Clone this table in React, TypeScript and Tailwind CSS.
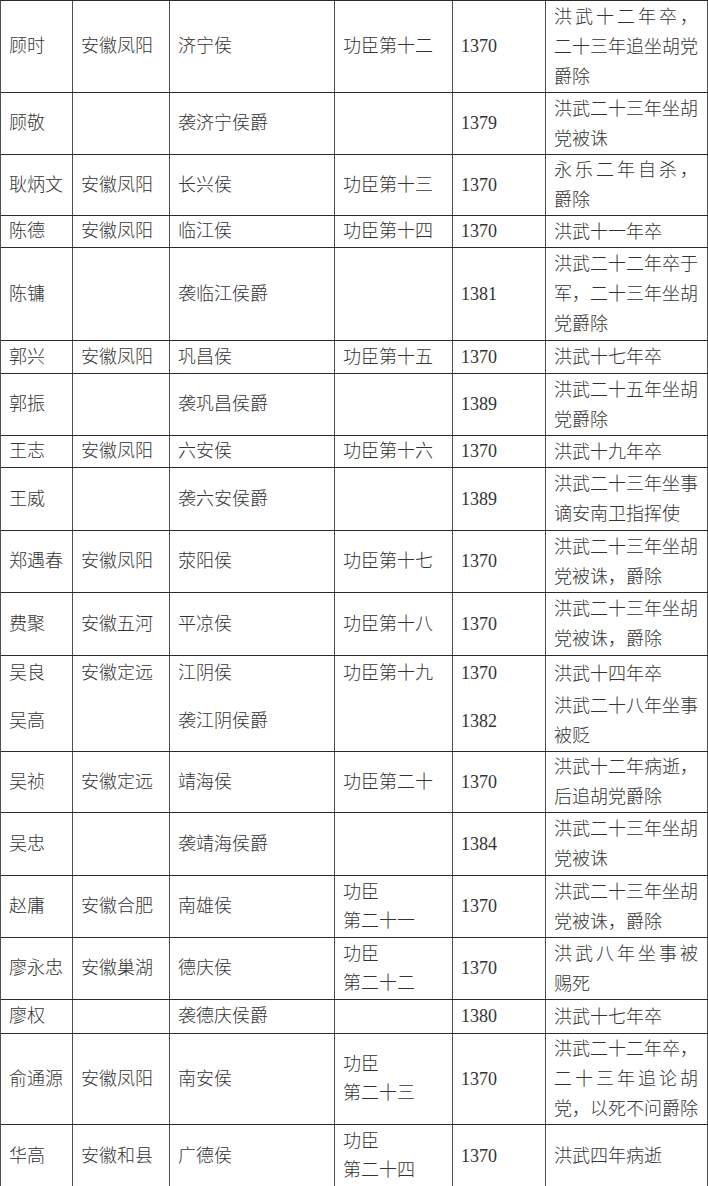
import React from 'react';
import clsx from 'clsx';

type Row = {
  h: string;
  name: string;
  place?: string;
  title: string;
  rank?: string[];
  year: string;
  note: string[];
  just?: number[];
};

const rows: Row[] = [
  { h: 'h-[92px]', name: '顾时', place: '安徽凤阳', title: '济宁侯', rank: ['功臣第十二'], year: '1370', note: ['洪武十二年卒，', '二十三年追坐胡党', '爵除'], just: [0] },
  { h: 'h-[62px]', name: '顾敬', title: '袭济宁侯爵', year: '1379', note: ['洪武二十三年坐胡', '党被诛'] },
  { h: 'h-[61px]', name: '耿炳文', place: '安徽凤阳', title: '长兴侯', rank: ['功臣第十三'], year: '1370', note: ['永乐二年自杀，', '爵除'], just: [0] },
  { h: 'h-[32px]', name: '陈德', place: '安徽凤阳', title: '临江侯', rank: ['功臣第十四'], year: '1370', note: ['洪武十一年卒'] },
  { h: 'h-[93px]', name: '陈镛', title: '袭临江侯爵', year: '1381', note: ['洪武二十二年卒于', '军，二十三年坐胡', '党爵除'] },
  { h: 'h-[33px]', name: '郭兴', place: '安徽凤阳', title: '巩昌侯', rank: ['功臣第十五'], year: '1370', note: ['洪武十七年卒'] },
  { h: 'h-[62px]', name: '郭振', title: '袭巩昌侯爵', year: '1389', note: ['洪武二十五年坐胡', '党爵除'] },
  { h: 'h-[32px]', name: '王志', place: '安徽凤阳', title: '六安侯', rank: ['功臣第十六'], year: '1370', note: ['洪武十九年卒'] },
  { h: 'h-[63px]', name: '王威', title: '袭六安侯爵', year: '1389', note: ['洪武二十三年坐事', '谪安南卫指挥使'] },
  { h: 'h-[62px]', name: '郑遇春', place: '安徽凤阳', title: '荥阳侯', rank: ['功臣第十七'], year: '1370', note: ['洪武二十三年坐胡', '党被诛，爵除'] },
  { h: 'h-[63px]', name: '费聚', place: '安徽五河', title: '平凉侯', rank: ['功臣第十八'], year: '1370', note: ['洪武二十三年坐胡', '党被诛，爵除'] },
];

const rowsAfter: Row[] = [
  { h: 'h-[61px]', name: '吴祯', place: '安徽定远', title: '靖海侯', rank: ['功臣第二十'], year: '1370', note: ['洪武十二年病逝，', '后追胡党爵除'] },
  { h: 'h-[63px]', name: '吴忠', title: '袭靖海侯爵', year: '1384', note: ['洪武二十三年坐胡', '党被诛'] },
  { h: 'h-[62px]', name: '赵庸', place: '安徽合肥', title: '南雄侯', rank: ['功臣', '第二十一'], year: '1370', note: ['洪武二十三年坐胡', '党被诛，爵除'] },
  { h: 'h-[62px]', name: '廖永忠', place: '安徽巢湖', title: '德庆侯', rank: ['功臣', '第二十二'], year: '1370', note: ['洪武八年坐事被', '赐死'], just: [0] },
  { h: 'h-[34px]', name: '廖权', title: '袭德庆侯爵', year: '1380', note: ['洪武十七年卒'] },
  { h: 'h-[91px]', name: '俞通源', place: '安徽凤阳', title: '南安侯', rank: ['功臣', '第二十三'], year: '1370', note: ['洪武二十二年卒，', '二十三年追论胡', '党，以死不问爵除'], just: [1] },
  { h: 'h-[63px]', name: '华高', place: '安徽和县', title: '广德侯', rank: ['功臣', '第二十四'], year: '1370', note: ['洪武四年病逝'] },
];

const grid = 'grid grid-cols-[72px_97px_165px_118px_93px_162px]';
const line = 'border-[#4d4d4d]';

function Cell({ children, className }: { children?: React.ReactNode; className?: string }) {
  return (
    <div className={clsx('flex flex-col justify-center border-r pl-2', line, className)}>
      {children}
    </div>
  );
}

function Note({ lines, just }: { lines: string[]; just?: number[] }) {
  return (
    <>
      {lines.map((t, i) => (
        <div
          key={i}
          className={clsx('whitespace-nowrap', just?.includes(i) && 'text-justify [text-align-last:justify]')}
        >
          {t}
        </div>
      ))}
    </>
  );
}

function TableRow({ r }: { r: Row }) {
  return (
    <div className={clsx(grid, r.h, 'border-b border-[#2a2a2a]')}>
      <Cell>{r.name}</Cell>
      <Cell>{r.place}</Cell>
      <Cell>{r.title}</Cell>
      <Cell className="leading-[29px]">
        {r.rank?.map((t) => <div key={t}>{t}</div>)}
      </Cell>
      <Cell className="text-[18px]">{r.year}</Cell>
      <Cell className="pr-[9px] leading-[30px]">
        <Note lines={r.note} just={r.just} />
      </Cell>
    </div>
  );
}

// 吴良 / 吴高 share one bordered block
function SplitRow() {
  const top = 'flex h-[35px] items-center';
  const bottom = 'flex flex-1 flex-col justify-center';
  return (
    <div className={clsx(grid, 'h-[96px] border-b border-[#2a2a2a]')}>
      <Cell className="!justify-start">
        <div className={top}>吴良</div>
        <div className={bottom}>吴高</div>
      </Cell>
      <Cell className="!justify-start">
        <div className={top}>安徽定远</div>
      </Cell>
      <Cell className="!justify-start">
        <div className={top}>江阴侯</div>
        <div className={bottom}>袭江阴侯爵</div>
      </Cell>
      <Cell className="!justify-start">
        <div className={top}>功臣第十九</div>
      </Cell>
      <Cell className="!justify-start text-[18px]">
        <div className={top}>1370</div>
        <div className={bottom}>1382</div>
      </Cell>
      <Cell className="!justify-start pr-[9px] leading-[30px]">
        <div className={top}>洪武十四年卒</div>
        <div className={bottom}>
          <div>洪武二十八年坐事</div>
          <div>被贬</div>
        </div>
      </Cell>
    </div>
  );
}

export default function App() {
  return (
    <div className="h-[1186px] w-[708px] overflow-hidden bg-white">
      <div
        className={clsx(
          "w-[708px] border-l border-t font-['Liberation_Serif','Noto_Sans_CJK_SC',serif] text-[18px] font-light text-[#333]",
          line,
          'border-t-[#2a2a2a]'
        )}
      >
        {rows.map((r) => (
          <TableRow key={r.name} r={r} />
        ))}
        <SplitRow />
        {rowsAfter.map((r) => (
          <TableRow key={r.name} r={r} />
        ))}
      </div>
    </div>
  );
}
